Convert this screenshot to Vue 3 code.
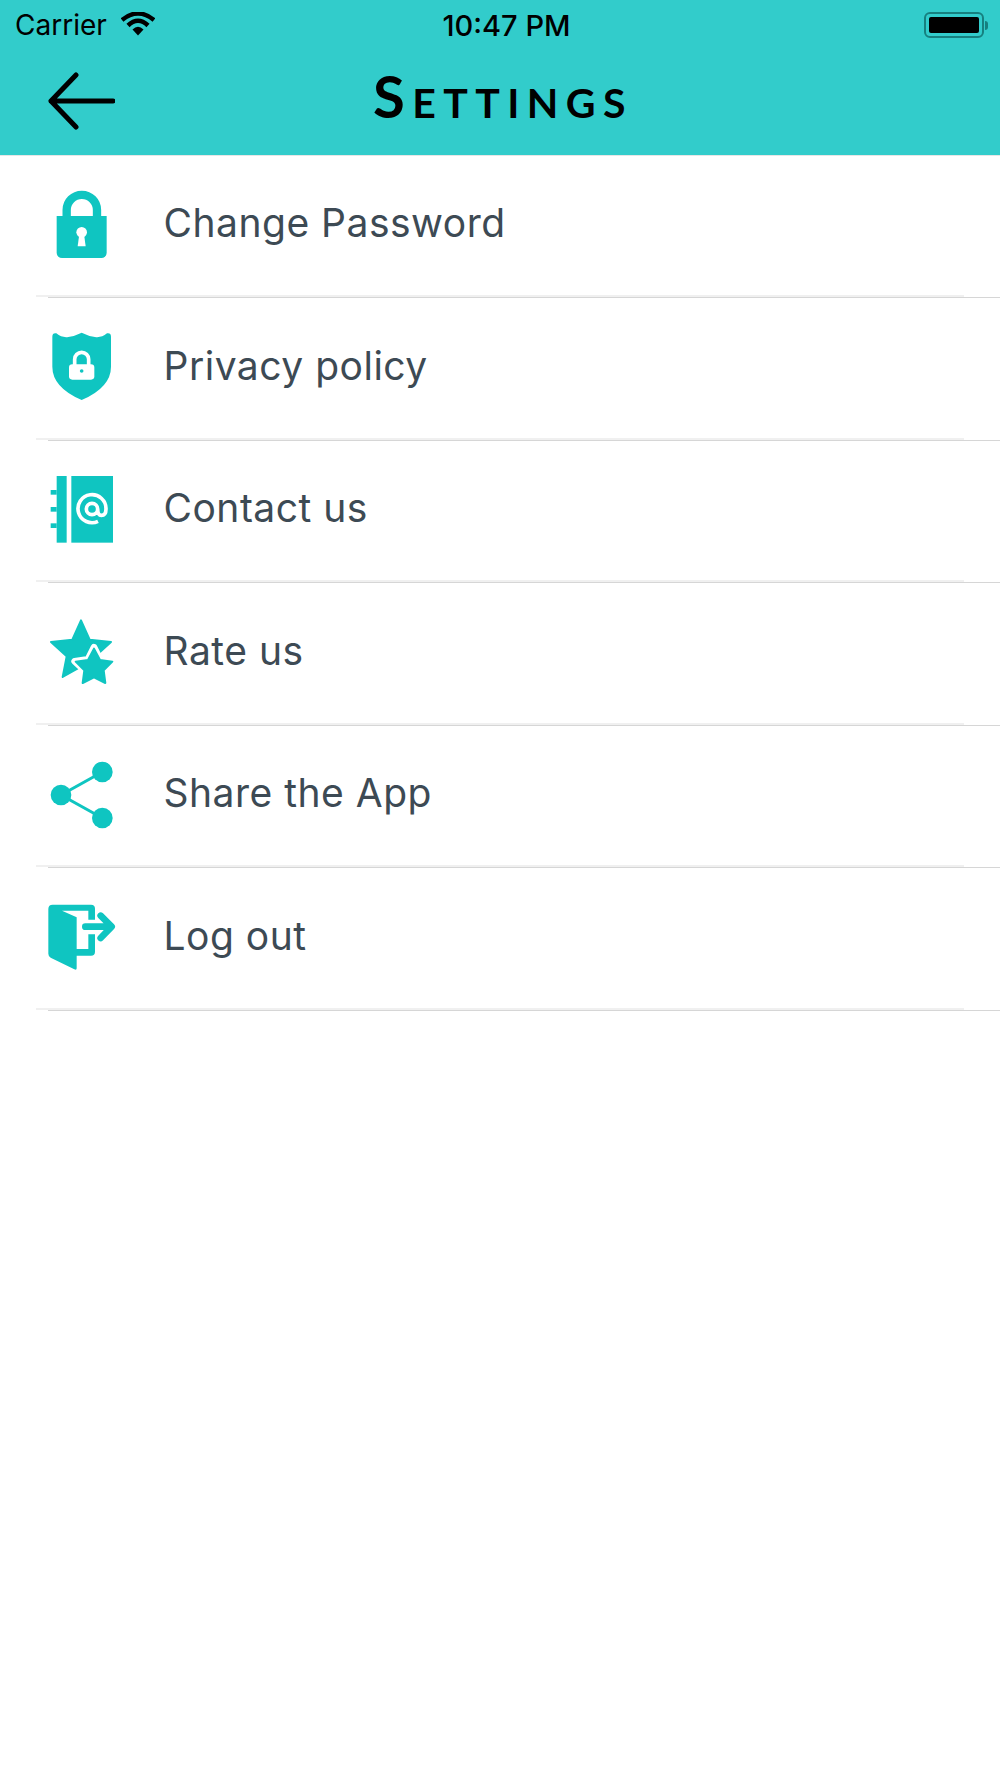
<template>
  <div class="screen">
    <header class="header">
      <div class="status-bar">
        <div class="status-left">
          <span>Carrier</span>
          <svg class="wifi" width="34" height="24" viewBox="0 0 34 24">
            <path d="M1 8 Q17 -5 33 8" fill="none" stroke="#000" stroke-width="4.500" />
            <path d="M7 13.500 Q17 4 27 13.500" fill="none" stroke="#000" stroke-width="4.500" />
            <path d="M11.500 17.500 Q17 12 22.500 17.500 L17 23.500 Z" fill="#000" />
          </svg>
        </div>
        <span class="status-time">10:47 PM</span>
        <div class="status-right">
          <div class="battery"><div class="battery-fill"></div></div>
          <div class="battery-cap"></div>
        </div>
      </div>
      <div class="nav-bar">
        <svg class="back" width="68" height="58" viewBox="0 0 68 58">
          <path d="M29 3 L4 29 L29 55 M4 29 H66" fill="none" stroke="#000" stroke-width="5" stroke-linecap="round" stroke-linejoin="round" />
        </svg>
        <h1 class="title">Settings</h1>
      </div>
    </header>

    <ul class="menu">
      <li v-for="item in items" :key="item.label" class="menu-item">
        <div class="row">
          <svg class="icon" width="110" height="80" :viewBox="item.viewBox">
            <template v-if="item.icon === 'lock'">
              <path d="M110 145 V120 a45.500 45.500 0 0 1 91 0 V145" fill="none" stroke="#0fc5c1" stroke-width="25" />
              <path d="M80 138 H230 V248 a16 16 0 0 1 -16 16 H96 a16 16 0 0 1 -16 -16 Z" fill="#0fc5c1" />
              <circle cx="155" cy="187" r="16" fill="#fff" />
              <path d="M148 192 L143 229 H167 L162 192 Z" fill="#fff" />
            </template>
            <template v-else-if="item.icon === 'shield'">
              <path d="M67 500 Q67 488 79 490 Q96 504 115 501 Q135 498 155 488 Q175 498 195 501 Q214 504 231 490 Q243 488 243 500 V590 Q243 652 155 690 Q67 652 67 590 Z" fill="#0fc5c1" />
              <path d="M134 590 V568 a21 21 0 0 1 42 0 V590" fill="none" stroke="#fff" stroke-width="11" />
              <rect x="117" y="583" width="76" height="46" rx="10" fill="#fff" />
              <circle cx="155" cy="603" r="5.500" fill="#0fc5c1" />
            </template>
            <template v-else-if="item.icon === 'contact'">
              <rect x="80" y="48" width="30" height="200" fill="#0fc5c1" />
              <rect x="124" y="48" width="125" height="200" fill="#0fc5c1" />
              <rect x="62" y="90" width="18" height="14" fill="#0fc5c1" />
              <rect x="62" y="141" width="18" height="14" fill="#0fc5c1" />
              <rect x="62" y="190" width="18" height="14" fill="#0fc5c1" />
              <path d="M204 184 A42 42 0 1 1 228 147 Q228 166 214 166 Q203 166 203 147 A17 17 0 1 0 169 147 A17 17 0 1 0 203 147" fill="none" stroke="#fff" stroke-width="11" />
            </template>
            <template v-else-if="item.icon === 'stars'">
              <polygon points="153,481 179,539 243,546 196,589 209,651 153,620 98,651 110,589 63,546 127,539" fill="#0fc5c1" stroke="#0fc5c1" stroke-width="6" stroke-linejoin="round" />
              <polygon points="192,562 210,598 250,604 221,631 227,671 192,652 157,671 163,631 134,604 174,598" fill="#fff" stroke="#fff" stroke-width="20" stroke-linejoin="round" />
              <polygon points="192,566 210,600 247,605 221,631 226,669 192,652 158,669 163,631 137,605 174,600" fill="#0fc5c1" stroke="#0fc5c1" stroke-width="6" stroke-linejoin="round" />
            </template>
            <template v-else-if="item.icon === 'share'">
              <path d="M217 78 L93 147 L217 216" fill="none" stroke="#0fc5c1" stroke-width="9" />
              <circle cx="217" cy="78" r="31" fill="#0fc5c1" />
              <circle cx="93" cy="147" r="31" fill="#0fc5c1" />
              <circle cx="217" cy="216" r="31" fill="#0fc5c1" />
            </template>
            <template v-else>
              <path d="M55 490 Q55 477 68 477 H183 Q195 477 195 489 V522 H175 V495 H96 L140 515 V610 H175 V566 H195 V618 Q195 630 183 630 H140 V668 Q140 674 133 671 L62 636 Q55 632 55 624 Z" fill="#0fc5c1" />
              <path d="M166 543 H244 M212 510 L245 543 L212 577" fill="none" stroke="#0fc5c1" stroke-width="20" stroke-linecap="round" stroke-linejoin="round" />
            </template>
          </svg>
          <span class="label">{{ item.label }}</span>
        </div>
        <div class="sep-pale"></div>
        <div class="sep-dark"></div>
      </li>
    </ul>
  </div>
</template>

<script setup>
const items = [
  { label: 'Change Password', icon: 'lock', viewBox: '0 48 330 240' },
  { label: 'Privacy policy', icon: 'shield', viewBox: '0 474 330 240' },
  { label: 'Contact us', icon: 'contact', viewBox: '0 33 330 240' },
  { label: 'Rate us', icon: 'stars', viewBox: '0 459 330 240' },
  { label: 'Share the App', icon: 'share', viewBox: '0 30 330 240' },
  { label: 'Log out', icon: 'logout', viewBox: '0 457 330 240' }
]
</script>

<style>
html,
body {
  background: #fff;
}
</style>

<style scoped>
.screen {
  width: 1000px;
  height: 1778px;
  background: #fff;
  overflow: hidden;
}

.header {
  height: 155px;
  background: #32cccb;
  border-bottom: 1px solid #e6e6e6;
  box-sizing: content-box;
}

.status-bar {
  height: 50px;
  display: grid;
  grid-template-columns: 1fr auto 1fr;
  align-items: center;
  padding: 0 12px 0 15px;
  font-family: Inter, "Liberation Sans", sans-serif;
  font-size: 28px;
  color: #000;
}

.status-left {
  display: flex;
  align-items: center;
  gap: 14px;
}

.wifi {
  margin-top: -2px;
}

.status-time {
  margin-left: 10px;
  font-size: 29px;
  font-weight: 500;
}

.status-right {
  display: flex;
  align-items: center;
  justify-content: flex-end;
  gap: 1px;
}

.battery {
  width: 60px;
  height: 26px;
  box-sizing: border-box;
  border: 2px solid #16807f;
  border-radius: 6px;
  padding: 3px;
}

.battery-fill {
  width: 50px;
  height: 16px;
  background: #000;
  border-radius: 2px;
}

.battery-cap {
  width: 3px;
  height: 9px;
  background: #16807f;
  border-radius: 0 3px 3px 0;
}

.nav-bar {
  display: flex;
  align-items: flex-start;
  padding: 22px 0 0 47px;
}

.title {
  margin: -11px 0 0 258px;
  font-family: Lato, "Liberation Sans", sans-serif;
  font-size: 58px;
  line-height: 70px;
  font-weight: 700;
  font-variant: small-caps;
  letter-spacing: 7.400px;
  color: #000;
}

.menu {
  margin: 0;
  padding: 0;
  list-style: none;
}

.row {
  height: 139.200px;
  display: flex;
  align-items: center;
  padding-left: 30px;
}

.icon {
  flex: none;
}

.label {
  margin: -6px 0 0 23.500px;
  font-family: Inter, "Open Sans", sans-serif;
  font-size: 39px;
  letter-spacing: 0.500px;
  color: #3d4a54;
}

.sep-pale {
  height: 2px;
  margin: 0 36px 0 36px;
  background: #f0f0f0;
}

.sep-dark {
  height: 1.300px;
  margin-left: 48px;
  background: #d6d6d6;
}
</style>
